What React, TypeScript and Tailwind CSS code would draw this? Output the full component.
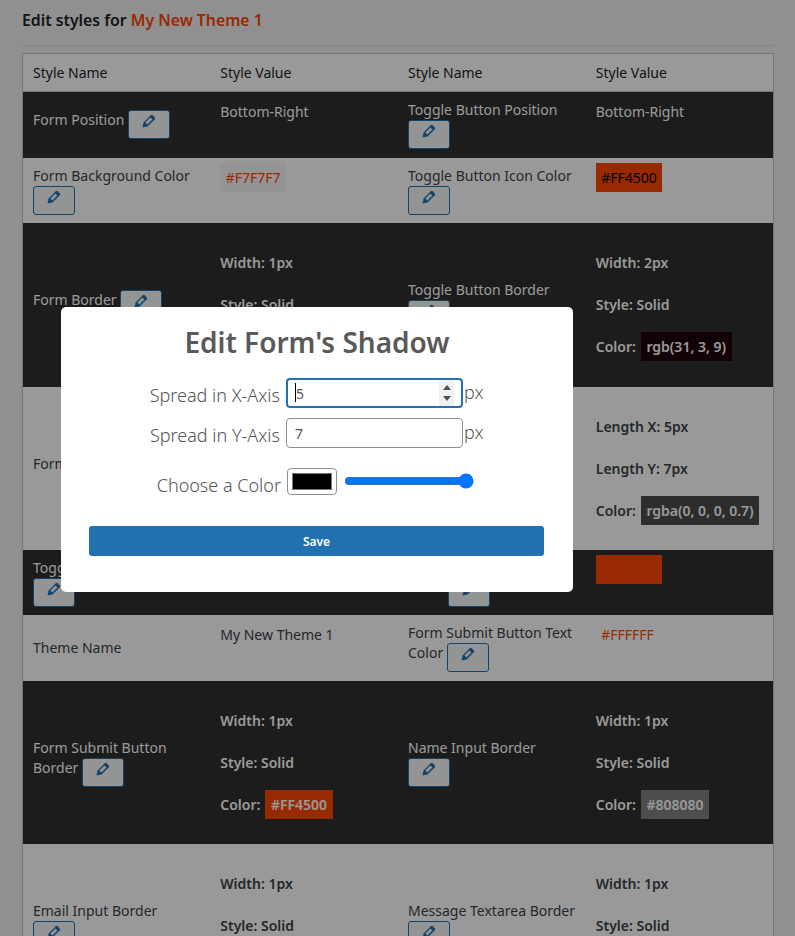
import { ReactNode } from "react";

type Part = { label: string; swatch?: string; swatchText?: string };
type Value = { text?: string; swatch?: string; swatchText?: string; parts?: Part[] };
type Cell = { name: string; edit?: boolean; indent?: boolean; value: Value };

const border = (w: string, s: string, c: string, st: string): Value => ({
  parts: [{ label: `Width: ${w}` }, { label: `Style: ${s}` }, { label: "Color:", swatch: c, swatchText: st }],
});

const shadow: Value = {
  parts: [{ label: "Length X: 5px" }, { label: "Length Y: 7px" }, { label: "Color:", swatch: "rgba(0, 0, 0, 0.7)", swatchText: "#ffffff" }],
};

const Rows: Cell[][] = [
  [
    { name: "Form Position", edit: true, value: { text: "Bottom-Right" } },
    { name: "Toggle Button Position", edit: true, value: { text: "Bottom-Right" } },
  ],
  [
    { name: "Form Background Color", edit: true, value: { swatch: "#F7F7F7", swatchText: "#FF4500" } },
    { name: "Toggle Button Icon Color", edit: true, value: { swatch: "#FF4500", swatchText: "#000000" } },
  ],
  [
    { name: "Form Border", edit: true, value: border("1px", "Solid", "#FF4500", "#ffffff") },
    { name: "Toggle Button Border", edit: true, value: border("2px", "Solid", "rgb(31, 3, 9)", "#ffffff") },
  ],
  [
    { name: "Form Shadow", edit: true, value: shadow },
    { name: "Toggle Button Shadow", edit: true, value: shadow },
  ],
  [
    { name: "Toggle Button Text Color", edit: true, value: { swatch: "#FF4500", swatchText: "#FF4500" } },
    { name: "Toggle Button Shadow", edit: true, indent: true, value: { swatch: "#FF4500", swatchText: "#FF4500" } },
  ],
  [
    { name: "Theme Name", value: { text: "My New Theme 1" } },
    { name: "Form Submit Button Text Color", edit: true, value: { swatch: "#FFFFFF", swatchText: "#FF4500" } },
  ],
  [
    { name: "Form Submit Button Border", edit: true, value: border("1px", "Solid", "#FF4500", "#ffffff") },
    { name: "Name Input Border", edit: true, value: border("1px", "Solid", "#808080", "#ffffff") },
  ],
  [
    { name: "Email Input Border", edit: true, value: border("1px", "Solid", "#808080", "#ffffff") },
    { name: "Message Textarea Border", edit: true, value: border("1px", "Solid", "#808080", "#ffffff") },
  ],
];

const rowHeights = ["h-[66px]", "h-[65px]", "h-[164px]", "h-[163px]", "h-[65px]", "h-[66px]", "h-[163px]", "h-[163px]"];

const EditButton = ({ indent }: { indent?: boolean }) => (
  <button
    type="button"
    className={`inline-flex h-[29px] w-[42px] justify-center rounded-[3px] border border-[#2271b1] bg-[#f6f7f7] pt-[3px] align-[-3px] ${indent ? "ml-[40px]" : ""}`}
  >
    <svg viewBox="0 0 14 14" className="h-[14px] w-[14px]">
      <path d="M.5 13.5 1.6 8.4 8.8 1.2a1.3 1.3 0 0 1 1.8 0l2.2 2.2a1.3 1.3 0 0 1 0 1.8L5.6 12.4Z" fill="#2271b1" />
      <path d="M3.4 8.6 8.4 3.6 10.4 5.6 5.4 10.6Z" fill="#f6f7f7" />
    </svg>
  </button>
);

const Swatch = ({ bg, color, children }: { bg: string; color: string; children: ReactNode }) => (
  // colours come from the theme data
  <span className="px-[5.5px] py-[5px]" style={{ backgroundColor: bg, color }}>
    {children}
  </span>
);

const ValueCell = ({ value }: { value: Value }) => {
  if (value.parts) {
    return (
      <td className="px-2.5 pt-[30px] pb-[29px] align-top font-semibold">
        <div className="flex flex-col gap-[22px]">
          {value.parts.map((part) => (
            <p key={part.label}>
              {part.label}
              {part.swatch && (
                <span className="ml-[5px]">
                  <Swatch bg={part.swatch} color={part.swatchText ?? "#fff"}>
                    {part.swatch}
                  </Swatch>
                </span>
              )}
            </p>
          ))}
        </div>
      </td>
    );
  }
  return (
    <td className="px-2.5 pt-2.5 align-top">
      {value.swatch ? (
        <Swatch bg={value.swatch} color={value.swatchText ?? "#000"}>
          {value.swatch}
        </Swatch>
      ) : (
        value.text
      )}
    </td>
  );
};

const ShadowModal = () => (
  <div className="absolute top-[307px] left-[61px] h-[285px] w-[512px] rounded-[5px] bg-white text-[#545454]">
    <h2 className="pt-[14px] text-center text-[28px] leading-[42px] font-semibold text-[#595959]">
      Edit Form's Shadow
    </h2>
    <div className="mt-[15px] flex items-center text-[18px]">
      <label className="w-[219px] pt-[3px] text-right font-light">Spread in X-Axis</label>
      {/* focused field, spinner + caret drawn over it */}
      <div className="relative ml-[6px]">
        <input
          type="number"
          defaultValue={5}
          className="h-[30px] w-[177px] [appearance:textfield] rounded-[4px] border-2 border-[#2271b1] pr-4 pl-2 text-sm outline-none [&::-webkit-inner-spin-button]:appearance-none"
        />
        <span className="absolute top-[5px] left-[9px] h-[19px] w-px bg-black" />
        <div className="absolute top-[2px] right-[9px] flex h-[26px] w-[15px] flex-col items-center justify-center gap-[6px] bg-[#f1f1f1]">
          <span className="h-0 w-0 border-x-[4px] border-b-[5px] border-x-transparent border-b-[#505050]" />
          <span className="h-0 w-0 border-x-[4px] border-t-[5px] border-x-transparent border-t-[#505050]" />
        </div>
      </div>
      <span className="ml-px pb-[2px] font-light">px</span>
    </div>
    <div className="mt-[10px] flex items-center text-[18px]">
      <label className="w-[219px] pt-[3px] text-right font-light">Spread in Y-Axis</label>
      <input
        type="number"
        defaultValue={7}
        className="ml-[6px] h-[30px] w-[177px] rounded-[4px] border border-[#8c8f94] pr-4 pl-2 text-sm outline-none"
      />
      <span className="ml-px pb-[2px] font-light">px</span>
    </div>
    <div className="mt-5 flex items-center text-[18px]">
      <label className="w-[220px] pt-[7px] text-right font-light">Choose a Color</label>
      <input
        type="color"
        defaultValue="#000000"
        className="ml-[6px] h-[27px] w-[50px] rounded-[4px] border border-[#8c8f94] bg-white p-0 [&::-webkit-color-swatch]:rounded-none [&::-webkit-color-swatch]:border [&::-webkit-color-swatch]:border-[#777] [&::-webkit-color-swatch-wrapper]:p-1"
      />
      <input type="range" min={0} max={1} step={0.1} defaultValue={1} className="ml-[7px] h-4 w-[130px] -translate-y-px" />
    </div>
    <button
      type="button"
      className="mt-[31px] ml-[28px] block h-[30px] w-[455px] rounded-[3px] bg-[#2271b1] pt-px text-xs font-semibold text-white"
    >
      Save
    </button>
  </div>
);

const NameAndValue = ({ cell }: { cell: Cell }) => (
  <>
    <td className="px-2.5 py-2 align-middle">
      {cell.name} {cell.edit && <EditButton indent={cell.indent} />}
    </td>
    <ValueCell value={cell.value} />
  </>
);

export default function App() {
  return (
    <div className="relative h-[936px] overflow-hidden bg-[#f0f0f1] font-['Noto_Sans',sans-serif] text-sm leading-5 text-[#3c434a]">
      <div className="pt-[10px] pr-[21px] pl-[22px]">
        <h1 className="text-[15.8px] leading-5 font-semibold text-[#1d2327]">
          Edit styles for <span className="text-[#FF4500]">My New Theme 1</span>
        </h1>
        <hr className="mt-[15px] border-[#dcdcde]" />
        <table className="mt-[7px] w-full table-fixed border border-[#c3c4c7] bg-white">
          <thead>
            <tr className="h-[38px] border-b border-[#c3c4c7] text-left text-[#1d2327]">
              <th className="px-2.5 font-normal">Style Name</th>
              <th className="px-2.5 font-normal">Style Value</th>
              <th className="px-2.5 font-normal">Style Name</th>
              <th className="px-2.5 font-normal">Style Value</th>
            </tr>
          </thead>
          <tbody>
            {Rows.map((row, i) => (
              <tr key={row[0].name} className={`${rowHeights[i]} ${i % 2 === 0 ? "bg-[#2f2f2f] text-white" : "bg-white"}`}>
                {row.map((cell, j) => (
                  <NameAndValue key={j} cell={cell} />
                ))}
              </tr>
            ))}
          </tbody>
        </table>
      </div>
      {/* dim layer + modal */}
      <div className="absolute inset-0 bg-black/40" />
      <ShadowModal />
    </div>
  );
}
